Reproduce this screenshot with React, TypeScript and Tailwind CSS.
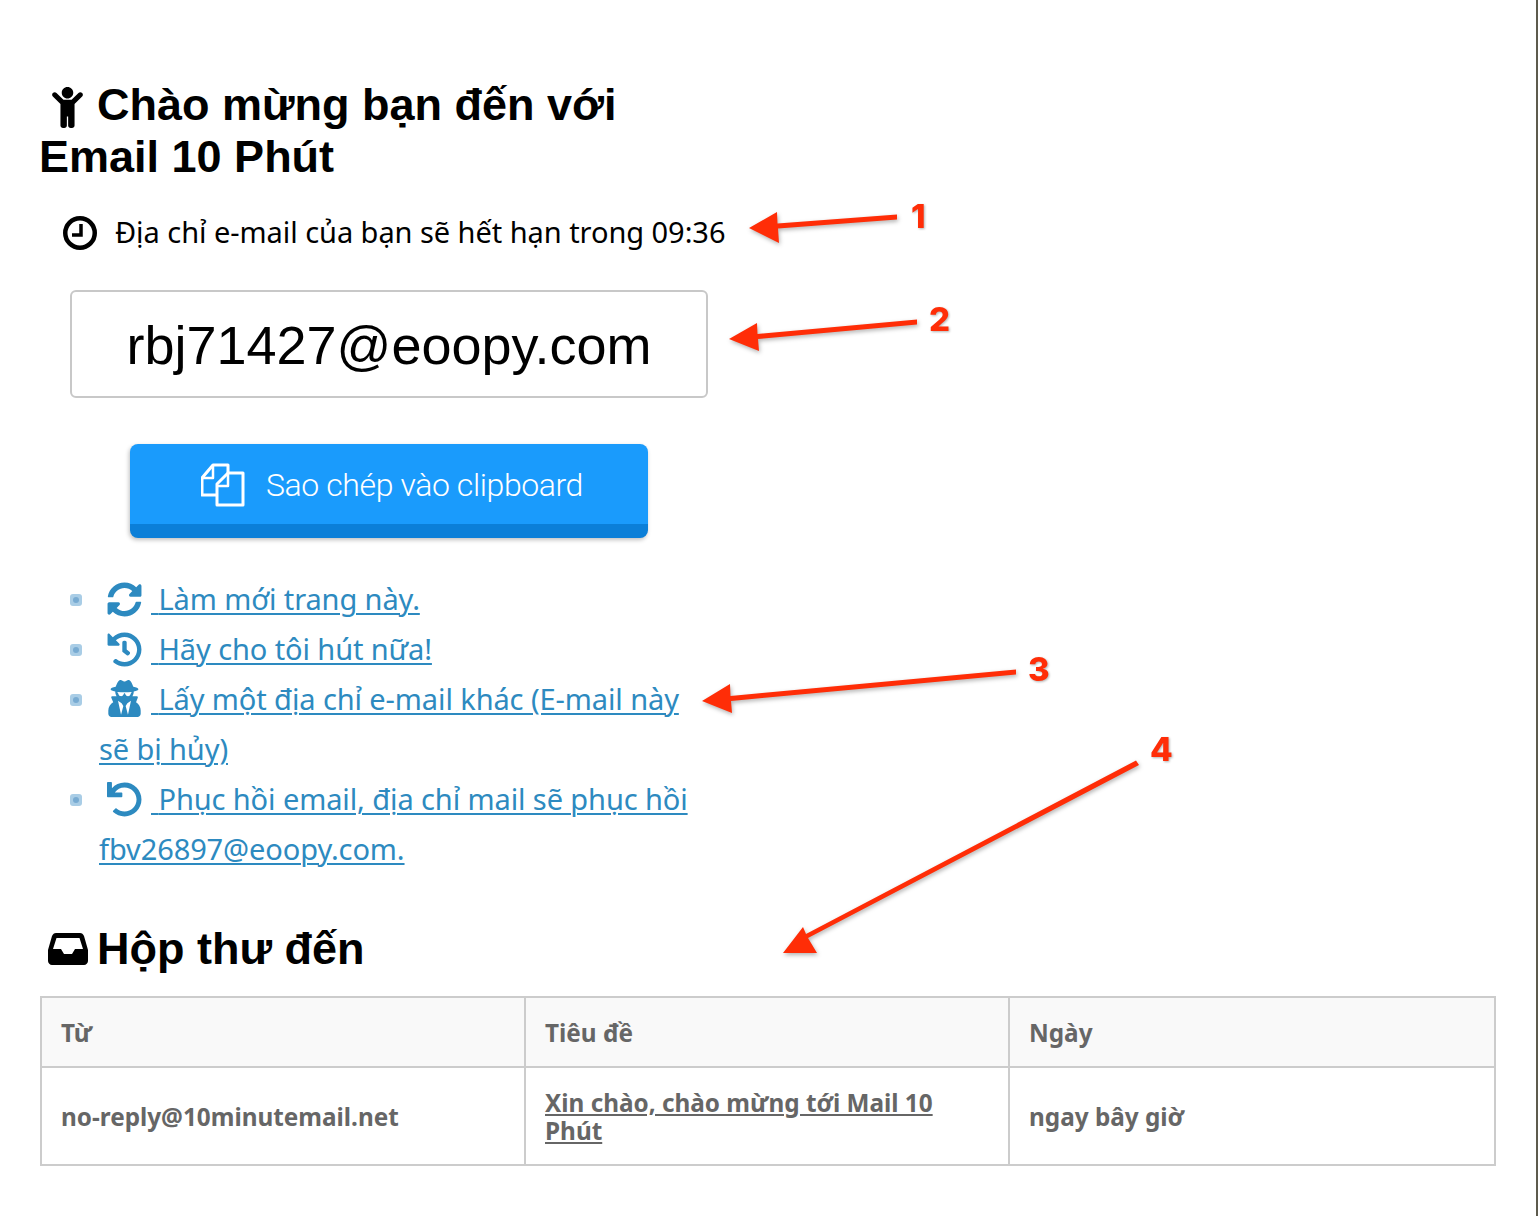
import { FaChild, FaSyncAlt, FaHistory, FaUserSecret, FaUndo } from "react-icons/fa";

const bodyFont = "font-['Noto_Sans',sans-serif]";

function ClockIcon() {
  return (
    <svg viewBox="0 0 34 34" className="mr-[18px] h-[34px] w-[34px]" fill="none" stroke="currentColor" strokeWidth="4.500">
      <circle cx="17" cy="17" r="14.750" />
      <path d="M18 8v11h-9" strokeWidth="3.500" />
    </svg>
  );
}

function InboxIcon() {
  return (
    <svg viewBox="0 0 40 32" className="h-[32px] w-[40px]">
      <path
        fill="currentColor"
        fillRule="evenodd"
        d="M8 0h24c2 0 3 1 4 3l4 14v11c0 2-2 4-4 4H4c-2 0-4-2-4-4V17L4 3c1-2 2-3 4-3zM8.500 5L5 16h8l3 5h8l3-5h8L31.500 5z"
      />
    </svg>
  );
}

function CopyIcon() {
  return (
    <svg viewBox="0 0 44 44" className="h-[44px] w-[44px]" fill="none" stroke="white" strokeWidth="3" strokeLinejoin="round">
      <path d="M16 32H1V15L12 2h15v8" />
      <path d="M12 2v13H1" strokeWidth="2.500" />
      <path d="M27 10h15v32H16V21L27 10z" />
      <path d="M27 10v13H16" strokeWidth="2.500" />
    </svg>
  );
}

function Bullet() {
  return (
    <span className="absolute left-[-29px] top-[20px] flex h-[12px] w-[12px] items-center justify-center rounded-[3px] bg-[#a9cde6] blur-[0.5px]">
      <span className="h-[6px] w-[6px] rounded-full bg-[#78abd2]" />
    </span>
  );
}

function ListLink({ icon, text }: { icon: React.ReactNode; text: string }) {
  return (
    <li className="relative">
      <Bullet />
      <a href="#" className="text-[#2d8ac0] underline decoration-[2px] underline-offset-[3px]">
        <span className="inline-block w-[52px] pl-[8px] align-[-7px]">{icon}</span> {text}
      </a>
    </li>
  );
}

function Arrows() {
  return (
    <svg className="pointer-events-none absolute left-0 top-0 h-[1216px] w-[1538px] drop-shadow-[1px_2px_2px_rgba(0,0,0,0.3)]" viewBox="0 0 1538 1216" fill="#ff2d07" stroke="none">
      <path d="M897 214.500L897 219.500L778 228.500L779 243L749 228L777 212L777.500 223.500Z" />
      <path d="M917 319.500L917 324.500L758 339L759 351L729 339L757 323L757.500 334Z" />
      <path d="M1016 669.500L1016 674.500L731 701L732 713L702 701L730 684L730.500 696Z" />
      <path d="M1136 760.500L1139 765L808 938L817 953L783 953L803 927L806 934Z" />
    </svg>
  );
}

function ArrowNumber({ n, className }: { n: string; className: string }) {
  return (
    <span className={`absolute font-['Inter',sans-serif] text-[33px] leading-none font-extrabold text-[#ff2d07] drop-shadow-[1px_1px_1px_rgba(0,0,0,0.3)] ${className}`}>
      {n}
    </span>
  );
}

export default function App() {
  return (
    <div className="relative h-[1216px] w-[1538px] overflow-hidden bg-white">
      <div className="h-full w-[1538px] border-r-2 border-[#5d5b4e] pl-[40px] pr-[42px] pt-[79px]">
        <h2 className="w-[640px] font-['Liberation_Sans',sans-serif] text-[45px] leading-[52px] font-bold text-black">
          <FaChild className="ml-[12px] mr-[14px] inline-block h-[41px] w-[31px] align-[-8px]" />
          Chào mừng bạn đến với
          <br />
          <span className="-ml-[1px]">Email 10 Phút</span>
        </h2>

        <div className={`mt-[25px] flex h-[50px] items-center pl-[23px] text-[29px] tracking-[-0.05px] text-black ${bodyFont}`}>
          <ClockIcon />
          <span className="-mt-[2px]">Địa chỉ e-mail của bạn sẽ hết hạn trong 09:36</span>
        </div>

        <div className="ml-[30px] mt-[32px] flex h-[108px] w-[638px] items-center justify-center rounded-[6px] border-2 border-[#c8c8c8] pt-[2px] font-['Liberation_Sans',sans-serif] text-[54px] text-black">
          rbj71427@eoopy.com
        </div>

        <button
          type="button"
          className="ml-[90px] mt-[46px] flex h-[94px] w-[518px] items-center justify-center gap-[21px] rounded-[8px] border-b-[14px] border-[#0b7fd8] bg-[#1a9bfc] pl-[6px] pt-[2px] font-['Roboto',sans-serif] text-[32px] font-light tracking-[-0.4px] text-white shadow-[-1px_2px_4px_rgba(0,0,0,0.25)]"
        >
          <CopyIcon />
          Sao chép vào clipboard
        </button>

        <ul className={`mt-[36px] w-[660px] pl-[59px] text-[29px] tracking-[-0.1px] leading-[50px] ${bodyFont}`}>
          <ListLink icon={<FaSyncAlt className="h-[35px] w-[35px]" />} text="Làm mới trang này." />
          <ListLink icon={<FaHistory className="h-[35px] w-[35px]" />} text="Hãy cho tôi hút nữa!" />
          <ListLink icon={<FaUserSecret className="h-[37px] w-[35px]" />} text="Lấy một địa chỉ e-mail khác (E-mail này sẽ bị hủy)" />
          <ListLink icon={<FaUndo className="h-[35px] w-[35px]" />} text="Phục hồi email, địa chỉ mail sẽ phục hồi fbv26897@eoopy.com." />
        </ul>

        <h2 className="mt-[49px] flex items-center gap-[9px] pl-[8px] font-['Liberation_Sans',sans-serif] text-[45px] leading-[52px] font-bold text-black">
          <InboxIcon />
          Hộp thư đến
        </h2>

        <table className={`mt-[21px] w-[1456px] table-fixed border-collapse text-[24.3px] font-bold text-[#666] ${bodyFont}`}>
          <thead>
            <tr className="h-[70px] bg-[#f9f9f9] text-left">
              <th className="w-[484px] border-2 border-[#ccc] px-[19px] pt-[2px] font-bold">Từ</th>
              <th className="w-[484px] border-2 border-[#ccc] px-[19px] pt-[2px] font-bold">Tiêu đề</th>
              <th className="border-2 border-[#ccc] px-[19px] pt-[2px] font-bold">Ngày</th>
            </tr>
          </thead>
          <tbody>
            <tr className="h-[98px]">
              <td className="border-2 border-[#ccc] px-[19px] pt-[2px]">no-reply@10minutemail.net</td>
              <td className="border-2 border-[#ccc] px-[19px] pt-[2px] leading-[28px]">
                <a href="#" className="underline">Xin chào, chào mừng tới Mail 10 Phút</a>
              </td>
              <td className="border-2 border-[#ccc] px-[19px] pt-[2px]">ngay bây giờ</td>
            </tr>
          </tbody>
        </table>
      </div>

      <Arrows />
      <ArrowNumber n="1" className="left-[911px] top-[200px]" />
      <ArrowNumber n="2" className="left-[929px] top-[303px]" />
      <ArrowNumber n="3" className="left-[1028px] top-[653px]" />
      <ArrowNumber n="4" className="left-[1150px] top-[733px]" />
    </div>
  );
}
